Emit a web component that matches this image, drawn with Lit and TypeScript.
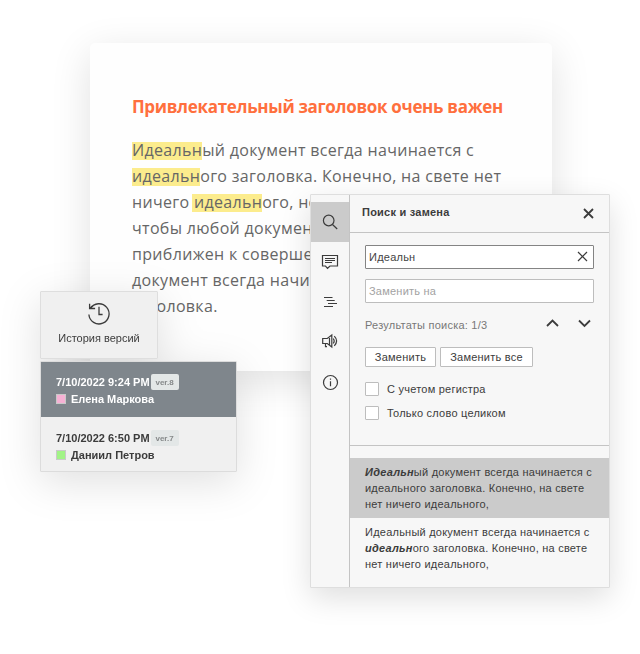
import { LitElement, html, css, svg } from "lit";
import { customElement, property, state } from "lit/decorators.js";
import { classMap } from "lit/directives/class-map.js";

@customElement("doc-page")
class DocPage extends LitElement {
  static styles = css`
    :host {
      display: block;
      box-sizing: border-box;
      width: 462px;
      height: 328px;
      padding: 50px 42px 0;
      border-radius: 5px;
      background: #fefefe;
      box-shadow: 0 10px 40px rgba(0, 0, 0, 0.12);
      font-family: "Open Sans", "Noto Sans", sans-serif;
    }
    h1 {
      margin: 0 0 17px;
      font-size: 17px;
      line-height: 27px;
      font-weight: 700;
      letter-spacing: -0.31px;
      color: #ff6f3d;
      white-space: nowrap;
    }
    .line {
      font-size: 16px;
      line-height: 26px;
      letter-spacing: 0.32px;
      color: #666;
      white-space: nowrap;
    }
    mark {
      display: inline-block;
      height: 18px;
      line-height: 16px;
      background: #fcec8d;
      color: inherit;
    }
    mark.inner {
      margin-left: -2px;
      padding-left: 2px;
    }
  `;
  render() {
    return html`
      <h1>Привлекательный заголовок очень важен</h1>
      <div class="line"><mark>Идеальн</mark>ый документ всегда начинается с</div>
      <div class="line"><mark>идеальн</mark>ого заголовка. Конечно, на свете нет</div>
      <div class="line">ничего <mark class="inner">идеальн</mark>ого, но</div>
      <div class="line">чтобы любой документ</div>
      <div class="line">приближен к соверше</div>
      <div class="line">документ всегда начи</div>
      <div class="line">заголовка.</div>
    `;
  }
}

@customElement("version-history")
class VersionHistory extends LitElement {
  static styles = css`
    :host {
      display: flex;
      flex-direction: column;
      align-items: flex-start;
      gap: 2px;
      font-family: "Liberation Sans", Arial, sans-serif;
      filter: drop-shadow(0 10px 20px rgba(0, 0, 0, 0.12));
    }
    .tab {
      box-sizing: border-box;
      width: 118px;
      height: 68px;
      padding-top: 10px;
      border: 1px solid #dedede;
      border-radius: 1px;
      background: #f0f0f0;
      display: flex;
      flex-direction: column;
      align-items: center;
      gap: 5px;
      font-size: 11px;
      line-height: 14px;
      color: #3c3c3c;
    }
    .list {
      box-sizing: border-box;
      width: 197px;
      height: 111px;
      border: 1px solid #dcdcdc;
      border-radius: 1px;
      background: #f0f0f0;
    }
    .item {
      box-sizing: border-box;
      height: 54px;
      padding: 13px 15px 0;
      font-size: 11px;
      font-weight: 700;
      color: #3c3c3c;
      white-space: nowrap;
    }
    .item.current {
      height: 55px;
      padding-top: 12px;
      background: #7f868c;
      color: #fff;
    }
    .row {
      display: flex;
      align-items: center;
    }
    .when {
      height: 16px;
      gap: 1px;
    }
    .who {
      height: 18px;
      gap: 5px;
    }
    .badge {
      width: 28px;
      height: 16px;
      border-radius: 2px;
      background: #e3e7e7;
      color: #858889;
      font-size: 8px;
      line-height: 17px;
      text-align: center;
    }
    .swatch {
      box-sizing: border-box;
      width: 10px;
      height: 10px;
      border: 1px solid #c9c9c9;
    }
    .pink { background: #f6b1d4; }
    .green { background: #a2f387; }
  `;
  private versions = [
    { when: "7/10/2022 9:24 PM", tag: "ver.8", who: "Елена Маркова", tint: "pink", current: true },
    { when: "7/10/2022 6:50 PM", tag: "ver.7", who: "Даниил Петров", tint: "green", current: false },
  ];
  render() {
    return html`
      <div class="tab">
        <svg width="24" height="24" viewBox="0 0 24 24" fill="none" stroke="#3c3c3c" stroke-width="1.3">
          <path d="M3.4 6.5A10.1 10.1 0 1 1 1.900 12.5" />
          <path d="M2.6 1.700v4.800h5.500M3 6.200l2.500-2.300M12 4.800v7.700h3.600" />
        </svg>
        <span>История версий</span>
      </div>
      <div class="list">
        ${this.versions.map(
          (v) => html`<div class=${classMap({ item: true, current: v.current })}>
            <div class="row when"><span>${v.when}</span><span class="badge">${v.tag}</span></div>
            <div class="row who"><span class="swatch ${v.tint}"></span><span>${v.who}</span></div>
          </div>`
        )}
      </div>
    `;
  }
}

const icons = {
  search: svg`<circle cx="6.700" cy="6.500" r="5.300"/><path d="M10.500 10.500l4.700 4.500"/>`,
  comment: svg`<path d="M.5 1.5h15v10.500H8L5.500 14.300 3.500 12H.5zM3 4.5h10M3 6.5h10M3 8.5h7"/>`,
  outline: svg`<path d="M2 3.5h8.500M4.700 6.5h8M6 9.5h9M2 12.5h9" />`,
  speaker: svg`<path d="M.7 4.5h4.600l4.500-3.500v12l-4.500-3.500H.7zM3.500 9.5v3.200h1.500M7.500 2.800v8.500M11.300 4.500q1.800 2.500 0 5M12.300 2.200q4.600 4.800 0 9.600"/>`,
  info: svg`<circle cx="8.5" cy="8.5" r="7"/><path d="M8.5 7.2v5M8.5 4.5v1.2"/>`,
};

@customElement("search-panel")
class SearchPanel extends LitElement {
  static styles = css`
    :host {
      box-sizing: border-box;
      width: 300px;
      height: 394px;
      display: flex;
      border: 1px solid #dedede;
      border-radius: 1px;
      background: #f7f7f7;
      box-shadow: 0 10px 30px rgba(0, 0, 0, 0.13);
      font-family: "Liberation Sans", Arial, sans-serif;
      font-size: 11px;
      letter-spacing: 0.23px;
      color: #3c3c3c;
    }
    svg { fill: none; stroke: #3c3c3c; stroke-width: 1.2; display: block; overflow: visible; }
    svg.bold { stroke-width: 1.8; }
    nav {
      width: 38px;
      padding-top: 7px;
      border-right: 1px solid #c4c4c4;
      display: flex;
      flex-direction: column;
    }
    .tool { height: 40px; display: grid; place-items: center; }
    .tool.active { background: #cbcbcb; }
    .main { flex: 1; min-width: 0; }
    header {
      box-sizing: border-box;
      height: 38px;
      padding: 0 15px 1px 12px;
      border-bottom: 1px solid #c4c4c4;
      display: flex;
      align-items: center;
      justify-content: space-between;
      font-weight: 700;
    }
    header span { padding-bottom: 2px; }
    .form {
      box-sizing: border-box;
      height: 213px;
      padding: 12px 15px 0;
      border-bottom: 1px solid #c4c4c4;
    }
    .field {
      box-sizing: border-box;
      height: 24px;
      padding: 0 5px 0 3px;
      margin-bottom: 10px;
      border: 1px solid #bdbdbd;
      border-radius: 1px;
      background: #fff;
      display: flex;
      align-items: center;
      justify-content: space-between;
      color: #a2a2a2;
    }
    .field.focus { border-color: #848484; color: #444; }
    .field svg { margin-bottom: 1px; }
    .results {
      height: 34px;
      display: flex;
      align-items: center;
      justify-content: space-between;
      margin-top: -5px;
      padding-right: 3px;
      color: #777;
    }
    .arrows { display: flex; gap: 19px; padding-bottom: 5px; }
    .buttons { display: flex; gap: 4px; margin: 5px 0 15px; }
    .button {
      box-sizing: border-box;
      width: 71px;
      height: 20px;
      border: 1px solid #bdbdbd;
      border-radius: 1px;
      background: #fff;
      line-height: 18px;
      text-align: center;
      white-space: nowrap;
    }
    .button.wide { width: 93px; }
    .check { height: 14px; margin-bottom: 10px; display: flex; align-items: center; gap: 8px; }
    .box {
      box-sizing: border-box;
      width: 14px;
      height: 14px;
      border: 1px solid #bdbdbd;
      border-radius: 1px;
      background: #fff;
    }
    .hits { padding-top: 12px; }
    .hit { box-sizing: border-box; height: 60px; padding: 6px 0 0 15px; line-height: 16px; white-space: nowrap; }
    .hit.active { background: #cbcbcb; }
    .hit b { font-style: italic; }
  `;

  @property() query = "Идеальн";
  @state() private tool = "search";

  render() {
    return html`
      <nav>
        ${Object.entries(icons).map(
          ([name, shape]) => html`<div class=${classMap({ tool: true, active: name === this.tool })}>
            <svg width="16" height="16" viewBox="0 0 16 16">${shape}</svg>
          </div>`
        )}
      </nav>
      <div class="main">
        <header>
          <span>Поиск и замена</span>
          <svg class="bold" width="11" height="11" viewBox="0 0 11 11"><path d="M1 1l9 9M10 1l-9 9" /></svg>
        </header>
        <div class="form">
          <div class="field focus">
            <span>${this.query}</span>
            <svg width="11" height="11" viewBox="0 0 11 11"><path d="M1 1l9 9M10 1l-9 9" /></svg>
          </div>
          <div class="field"><span>Заменить на</span></div>
          <div class="results">
            <span>Результаты поиска: 1/3</span>
            <div class="arrows">
              <svg class="bold" width="13" height="8" viewBox="0 0 13 8"><path d="M1 7l5.5-5.5L12 7" /></svg>
              <svg class="bold" width="13" height="8" viewBox="0 0 13 8"><path d="M1 1.5L6.5 7 12 1.5" /></svg>
            </div>
          </div>
          <div class="buttons">
            <div class="button">Заменить</div>
            <div class="button wide">Заменить все</div>
          </div>
          <div class="check"><span class="box"></span><span>С учетом регистра</span></div>
          <div class="check"><span class="box"></span><span>Только слово целиком</span></div>
        </div>
        <div class="hits">
          <div class="hit active">
            <b>Идеальн</b>ый документ всегда начинается с<br />идеального заголовка. Конечно, на свете<br />нет ничего идеального,
          </div>
          <div class="hit">
            Идеальный документ всегда начинается с<br /><b>идеальн</b>ого заголовка. Конечно, на свете<br />нет ничего идеального,
          </div>
        </div>
      </div>
    `;
  }
}

@customElement("app-root")
class AppRoot extends LitElement {
  static styles = css`
    :host {
      display: block;
      position: relative;
      box-sizing: border-box;
      width: 640px;
      height: 654px;
      padding: 43px 0 0 90px;
      background: #fff;
      overflow: hidden;
    }
    version-history { position: absolute; left: 40px; top: 291px; }
    search-panel { position: absolute; left: 310px; top: 194px; }
  `;
  render() {
    return html`<doc-page></doc-page><version-history></version-history><search-panel></search-panel>`;
  }
}
